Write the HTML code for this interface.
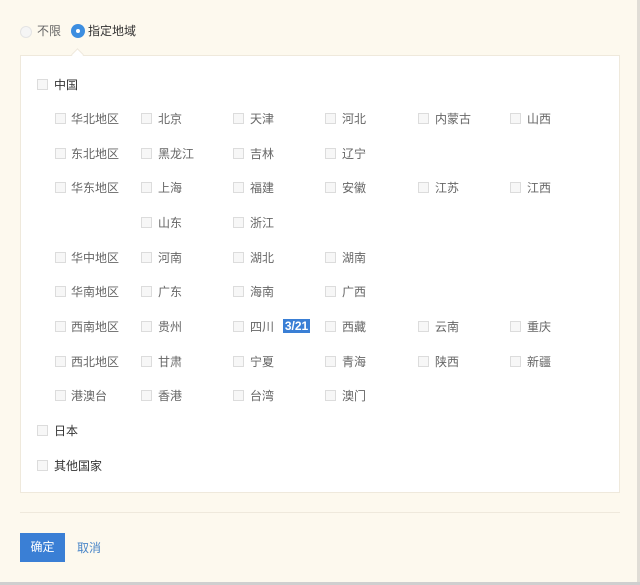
<!DOCTYPE html>
<html><head><meta charset="utf-8"><style>
body{margin:0;width:640px;height:585px;background:#fdf9ee;position:relative;overflow:hidden;font-family:"Liberation Sans","Noto Sans CJK SC",sans-serif;font-size:12px;color:#666}
.a{position:absolute;white-space:nowrap;line-height:16px}
.c{position:absolute;width:9px;height:9px;border:1px solid #dcdcdc;background:#f7f7f7}
.panel{position:absolute;left:20px;top:55px;width:598px;height:436px;background:#fff;border:1px solid #efe9dc}
.b{color:#333}
</style></head><body>
<div style="position:absolute;right:0;top:0;width:3px;height:585px;background:#e0ddd6"></div>
<div style="position:absolute;left:0;bottom:0;width:640px;height:3px;background:#cfcfcf"></div>
<div style="position:absolute;left:20px;top:26px;width:10px;height:10px;border-radius:50%;border:1px solid #e4e4e4;background:#f5f5f5"></div>
<div class="a" style="left:37px;top:23px">不限</div>
<div style="position:absolute;left:71px;top:24px;width:14px;height:14px;border-radius:50%;background:#3d8ee0"></div>
<div style="position:absolute;left:76px;top:29px;width:4px;height:4px;border-radius:50%;background:#fff"></div>
<div class="a b" style="left:88px;top:23px">指定地域</div>
<div class="panel"></div>
<div style="position:absolute;left:73px;top:50px;width:8px;height:8px;background:#fff;border-left:1px solid #efe9dc;border-top:1px solid #efe9dc;transform:rotate(45deg)"></div>
<div style="position:absolute;left:20px;top:512px;width:600px;height:1px;background:#efe9dc"></div>
<div class="a" style="left:20px;top:533px;width:45px;height:29px;background:#3a7fd5;color:#fff;line-height:29px;text-align:center">确定</div>
<div class="a" style="left:77px;top:540px;color:#4a86c8">取消</div>
<div class="a" style="left:283px;top:319px;width:27px;height:14px;line-height:14px;background:#3a7fd5;color:#fff;font-weight:bold;text-align:center">3/21</div>

<div class="c" style="left:37px;top:79px"></div><div class="a b" style="left:54px;top:77px">中国</div>
<div class="c" style="left:37px;top:425px"></div><div class="a b" style="left:54px;top:423px">日本</div>
<div class="c" style="left:37px;top:460px"></div><div class="a b" style="left:54px;top:458px">其他国家</div>

<!-- row 119 -->
<div class="c" style="left:55px;top:113px"></div><div class="a" style="left:71px;top:111px">华北地区</div>
<div class="c" style="left:141px;top:113px"></div><div class="a" style="left:158px;top:111px">北京</div>
<div class="c" style="left:233px;top:113px"></div><div class="a" style="left:250px;top:111px">天津</div>
<div class="c" style="left:325px;top:113px"></div><div class="a" style="left:342px;top:111px">河北</div>
<div class="c" style="left:418px;top:113px"></div><div class="a" style="left:435px;top:111px">内蒙古</div>
<div class="c" style="left:510px;top:113px"></div><div class="a" style="left:527px;top:111px">山西</div>
<!-- 154 -->
<div class="c" style="left:55px;top:148px"></div><div class="a" style="left:71px;top:146px">东北地区</div>
<div class="c" style="left:141px;top:148px"></div><div class="a" style="left:158px;top:146px">黑龙江</div>
<div class="c" style="left:233px;top:148px"></div><div class="a" style="left:250px;top:146px">吉林</div>
<div class="c" style="left:325px;top:148px"></div><div class="a" style="left:342px;top:146px">辽宁</div>
<!-- 188 -->
<div class="c" style="left:55px;top:182px"></div><div class="a" style="left:71px;top:180px">华东地区</div>
<div class="c" style="left:141px;top:182px"></div><div class="a" style="left:158px;top:180px">上海</div>
<div class="c" style="left:233px;top:182px"></div><div class="a" style="left:250px;top:180px">福建</div>
<div class="c" style="left:325px;top:182px"></div><div class="a" style="left:342px;top:180px">安徽</div>
<div class="c" style="left:418px;top:182px"></div><div class="a" style="left:435px;top:180px">江苏</div>
<div class="c" style="left:510px;top:182px"></div><div class="a" style="left:527px;top:180px">江西</div>
<!-- 223 -->
<div class="c" style="left:141px;top:217px"></div><div class="a" style="left:158px;top:215px">山东</div>
<div class="c" style="left:233px;top:217px"></div><div class="a" style="left:250px;top:215px">浙江</div>
<!-- 258 -->
<div class="c" style="left:55px;top:252px"></div><div class="a" style="left:71px;top:250px">华中地区</div>
<div class="c" style="left:141px;top:252px"></div><div class="a" style="left:158px;top:250px">河南</div>
<div class="c" style="left:233px;top:252px"></div><div class="a" style="left:250px;top:250px">湖北</div>
<div class="c" style="left:325px;top:252px"></div><div class="a" style="left:342px;top:250px">湖南</div>
<!-- 292 -->
<div class="c" style="left:55px;top:286px"></div><div class="a" style="left:71px;top:284px">华南地区</div>
<div class="c" style="left:141px;top:286px"></div><div class="a" style="left:158px;top:284px">广东</div>
<div class="c" style="left:233px;top:286px"></div><div class="a" style="left:250px;top:284px">海南</div>
<div class="c" style="left:325px;top:286px"></div><div class="a" style="left:342px;top:284px">广西</div>
<!-- 327 -->
<div class="c" style="left:55px;top:321px"></div><div class="a" style="left:71px;top:319px">西南地区</div>
<div class="c" style="left:141px;top:321px"></div><div class="a" style="left:158px;top:319px">贵州</div>
<div class="c" style="left:233px;top:321px"></div><div class="a" style="left:250px;top:319px">四川</div>
<div class="c" style="left:325px;top:321px"></div><div class="a" style="left:342px;top:319px">西藏</div>
<div class="c" style="left:418px;top:321px"></div><div class="a" style="left:435px;top:319px">云南</div>
<div class="c" style="left:510px;top:321px"></div><div class="a" style="left:527px;top:319px">重庆</div>
<!-- 362 -->
<div class="c" style="left:55px;top:356px"></div><div class="a" style="left:71px;top:354px">西北地区</div>
<div class="c" style="left:141px;top:356px"></div><div class="a" style="left:158px;top:354px">甘肃</div>
<div class="c" style="left:233px;top:356px"></div><div class="a" style="left:250px;top:354px">宁夏</div>
<div class="c" style="left:325px;top:356px"></div><div class="a" style="left:342px;top:354px">青海</div>
<div class="c" style="left:418px;top:356px"></div><div class="a" style="left:435px;top:354px">陕西</div>
<div class="c" style="left:510px;top:356px"></div><div class="a" style="left:527px;top:354px">新疆</div>
<!-- 396 -->
<div class="c" style="left:55px;top:390px"></div><div class="a" style="left:71px;top:388px">港澳台</div>
<div class="c" style="left:141px;top:390px"></div><div class="a" style="left:158px;top:388px">香港</div>
<div class="c" style="left:233px;top:390px"></div><div class="a" style="left:250px;top:388px">台湾</div>
<div class="c" style="left:325px;top:390px"></div><div class="a" style="left:342px;top:388px">澳门</div>
</body></html>
